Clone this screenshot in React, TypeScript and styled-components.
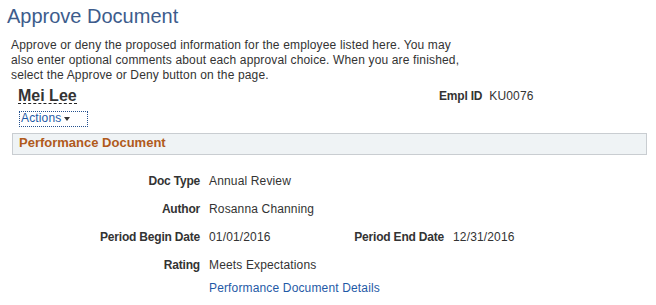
import { Fragment } from 'react'
import styled, { createGlobalStyle } from 'styled-components'

const GlobalStyle = createGlobalStyle`
  body {
    margin: 0;
    font-family: 'Liberation Sans', Arial, sans-serif;
    font-size: 12px;
    letter-spacing: 0.15px;
    color: #333;
    background: #fff;
  }
`

type Field = {
  label: string;
  value: string;
  label2?: string;
  value2?: string;
}

const fields: Field[] = [
  { label: 'Doc Type', value: 'Annual Review' },
  { label: 'Author', value: 'Rosanna Channing' },
  { label: 'Period Begin Date', value: '01/01/2016', label2: 'Period End Date', value2: '12/31/2016' },
  { label: 'Rating', value: 'Meets Expectations' },
]

const Page = styled.div`
  display: flex;
  flex-direction: column;
  padding-right: 9px;
`

const Title = styled.h1`
  margin: 4px 0 0 7px;
  font-size: 20px;
  line-height: 24px;
  font-weight: normal;
  letter-spacing: 0;
  color: #3d5c8c;
`

const Intro = styled.p`
  margin: 10px 0 0 11px;
  line-height: 15px;
  white-space: nowrap;
`

const HeaderRow = styled.div`
  margin: 5px 0 0 18px;
  display: grid;
  grid-template-columns: 414px auto 1fr;
  column-gap: 7px;
  align-items: start;
`

const Name = styled.span`
  justify-self: start;
  font-size: 16px;
  line-height: 15px;
  font-weight: bold;
  letter-spacing: 0;
  color: #333;
  border-bottom: 1px dashed #222;
`

const HeaderLabel = styled.span`
  margin-top: 1px;
  font-weight: bold;
  letter-spacing: -0.2px;
  line-height: 14px;
`

const HeaderValue = styled.span`
  margin-top: 1px;
  line-height: 14px;
`

const ActionsButton = styled.button`
  margin: 7px 0 0 19px;
  align-self: flex-start;
  width: 69px;
  height: 16px;
  padding: 0 0 2px 1px;
  display: flex;
  align-items: center;
  gap: 3px;
  background: none;
  border: 1px dotted #24508e;
  font-family: inherit;
  font-size: 12px;
  letter-spacing: 0.15px;
  line-height: 12px;
  color: #1f5aa6;
  cursor: pointer;
`

const Caret = styled.span`
  display: inline-block;
  width: 0;
  height: 0;
  margin-top: 2px;
  border-left: 3.5px solid transparent;
  border-right: 3.5px solid transparent;
  border-top: 4px solid #333;
`

const SectionHeader = styled.div`
  margin: 6px 0 0 12px;
  height: 20px;
  box-sizing: content-box;
  border: 1px solid #c9cdd1;
  background: #eff3f5;
  padding: 0 0 0 6px;
`

const SectionTitle = styled.h2`
  margin: 0;
  font-size: 13px;
  line-height: 17px;
  font-weight: bold;
  letter-spacing: 0;
  color: #b05a1c;
`

const FieldGrid = styled.div`
  margin: 19px 0 0 12px;
  display: grid;
  grid-template-columns: 188px 126px 100px auto;
  column-gap: 9px;
  row-gap: 14px;
  line-height: 14px;
`

const Label = styled.span<{ $col?: number }>`
  grid-column: ${({ $col }) => $col ?? 1};
  text-align: right;
  font-weight: bold;
  letter-spacing: -0.2px;
  white-space: nowrap;
`

const Value = styled.span<{ $col?: number }>`
  grid-column: ${({ $col }) => $col ?? 2};
  white-space: nowrap;
`

const DetailsLink = styled.a`
  grid-column: 2 / span 3;
  margin-top: -5px;
  color: #1f5aa6;
  text-decoration: none;
  white-space: nowrap;
  cursor: pointer;
`

export default function App() {
  return (
    <Page>
      <GlobalStyle />
      <Title>Approve Document</Title>
      <Intro>
        Approve or deny the proposed information for the employee listed here. You may
        <br />
        also enter optional comments about each approval choice. When you are finished,
        <br />
        select the Approve or Deny button on the page.
      </Intro>
      <HeaderRow>
        <Name>Mei Lee</Name>
        <HeaderLabel>Empl ID</HeaderLabel>
        <HeaderValue>KU0076</HeaderValue>
      </HeaderRow>
      <ActionsButton>
        Actions <Caret />
      </ActionsButton>
      <SectionHeader>
        <SectionTitle>Performance Document</SectionTitle>
      </SectionHeader>
      <FieldGrid>
        {fields.map((f) => (
          <Fragment key={f.label}>
            <Label>{f.label}</Label>
            <Value>{f.value}</Value>
            {f.label2 && <Label $col={3}>{f.label2}</Label>}
            {f.value2 && <Value $col={4}>{f.value2}</Value>}
          </Fragment>
        ))}
        <DetailsLink>Performance Document Details</DetailsLink>
      </FieldGrid>
    </Page>
  )
}
